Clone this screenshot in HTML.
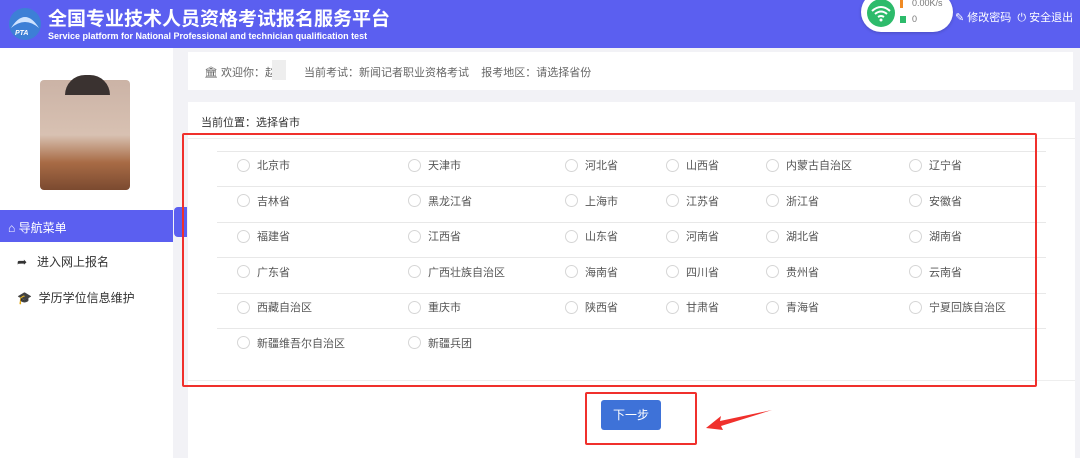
<!DOCTYPE html>
<html><head><meta charset="utf-8"><style>
*{margin:0;padding:0;box-sizing:border-box}
body{width:1080px;height:458px;overflow:hidden;background:#f2f2f6;font-family:"Liberation Sans","Noto Sans CJK SC",sans-serif;position:relative;color:#555}
.a{position:absolute}
.hdr{left:0;top:0;width:1080px;height:48px;background:#5b5ff0}
.t1{left:48px;top:4px;color:#fff;font-size:19px;font-weight:bold;white-space:nowrap}
.t2{left:48px;top:31px;color:#fff;font-size:9px;font-weight:bold;white-space:nowrap}
.side{left:0;top:48px;width:173px;height:410px;background:#fff}
.panel{background:#fff}
.line{height:1px;background:#e8e8e8;left:217px;width:829px}
.r{width:13px;height:13px;border:1px solid #d6d6d6;border-radius:50%}
.tx{font-size:11px;color:#555;white-space:nowrap}
</style></head><body>
<div class="a hdr"></div>
<svg class="a" style="left:7px;top:6px" width="36" height="36" viewBox="0 0 36 36"><circle cx="18" cy="18" r="16" fill="#3d7fd6"/><path d="M4 22 Q18 0 32 22 Q18 10 4 22Z" fill="#cfe3ff"/><text x="8" y="29" font-size="7" font-style="italic" font-weight="bold" fill="#fff" font-family="Liberation Sans">PTA</text></svg>
<div class="a t1">全国专业技术人员资格考试报名服务平台</div>
<div class="a t2">Service platform for National Professional and technician qualification test</div>
<div class="a" style="left:861px;top:-8px;width:92px;height:40px;background:#fff;border-radius:20px;box-shadow:0 1px 3px rgba(0,0,0,.2)"></div>
<svg class="a" style="left:866px;top:0" width="30" height="28" viewBox="0 0 30 28"><circle cx="15" cy="13" r="14" fill="#2dbb6b"/><path d="M6 11 Q15 3 24 11 M9 14 Q15 9 21 14 M12 17 Q15 15 18 17" stroke="#fff" stroke-width="2" fill="none"/><circle cx="15" cy="20" r="1.5" fill="#fff"/></svg>
<div class="a" style="left:900px;top:0;width:3px;height:8px;background:#f08a24"></div>
<div class="a tx" style="left:912px;top:-2px;font-size:9px;color:#777">0.00K/s</div>
<div class="a" style="left:900px;top:16px;width:6px;height:7px;background:#2dbb6b"></div>
<div class="a tx" style="left:912px;top:14px;font-size:9px;color:#777">0</div>
<div class="a tx" style="left:955px;top:9px;color:#fff;font-size:11px">✎ 修改密码 &nbsp;⏻ 安全退出</div>

<div class="a side"></div>
<div class="a" style="left:40px;top:80px;width:90px;height:110px;border-radius:4px;background:linear-gradient(180deg,#cbb3a6 0%,#d8c1b2 50%,#a86b45 75%,#7b4a30 100%)"></div>
<div class="a" style="left:65px;top:75px;width:45px;height:20px;border-radius:20px 20px 0 0;background:#3a3230"></div>
<div class="a" style="left:0;top:210px;width:173px;height:32px;background:#5b5ff0"></div>
<div class="a tx" style="left:8px;top:219px;color:#fff;font-size:12px">⌂ 导航菜单</div>
<div class="a" style="left:174px;top:207px;width:13px;height:30px;background:#5b5ff0;border-radius:4px 0 0 4px"></div>
<div class="a tx" style="left:17px;top:253px;color:#333;font-size:12px">➦ &nbsp;&nbsp;进入网上报名</div>
<div class="a tx" style="left:17px;top:289px;color:#333;font-size:12px">🎓 &nbsp;学历学位信息维护</div>

<div class="a panel" style="left:188px;top:52px;width:885px;height:38px"></div>
<div class="a tx" style="left:204px;top:64px;color:#666">🏛 欢迎你：赵</div>
<div class="a" style="left:272px;top:60px;width:14px;height:20px;background:#eee"></div>
<div class="a tx" style="left:304px;top:64px;color:#666">当前考试：新闻记者职业资格考试 &nbsp;&nbsp;&nbsp;报考地区：请选择省份</div>
<div class="a panel" style="left:188px;top:102px;width:887px;height:356px"></div>
<div class="a tx" style="left:201px;top:114px;color:#333">当前位置：选择省市</div>
<div class="a" style="left:188px;top:138px;width:887px;height:1px;background:#eee"></div>

<div class="a line" style="top:151px"></div>
<div class="a line" style="top:186px"></div>
<div class="a line" style="top:222px"></div>
<div class="a line" style="top:257px"></div>
<div class="a line" style="top:293px"></div>
<div class="a line" style="top:328px"></div>
<div class="a" style="left:188px;top:380px;width:887px;height:1px;background:#eee"></div>

<div id="g"></div>
<script>
var rows=[["北京市","天津市","河北省","山西省","内蒙古自治区","辽宁省"],["吉林省","黑龙江省","上海市","江苏省","浙江省","安徽省"],["福建省","江西省","山东省","河南省","湖北省","湖南省"],["广东省","广西壮族自治区","海南省","四川省","贵州省","云南省"],["西藏自治区","重庆市","陕西省","甘肃省","青海省","宁夏回族自治区"],["新疆维吾尔自治区","新疆兵团"]];
var xs=[237,408,565,666,766,909],h="";
rows.forEach(function(r,i){var y=165+i*35.5;r.forEach(function(t,j){h+='<div class="a r" style="left:'+xs[j]+'px;top:'+(y-6.5)+'px"></div><div class="a tx" style="left:'+(xs[j]+20)+'px;top:'+(y-8)+'px">'+t+'</div>';});});
document.getElementById("g").innerHTML=h;
</script>

<div class="a" style="left:182px;top:133px;width:855px;height:254px;border:2px solid #f0302c;border-radius:2px"></div>
<div class="a" style="left:601px;top:400px;width:60px;height:30px;background:#3e72d8;border-radius:3px;color:#fff;font-size:12px;text-align:center;line-height:30px">下一步</div>
<div class="a" style="left:585px;top:392px;width:112px;height:53px;border:2px solid #f0302c;border-radius:2px"></div>
<svg class="a" style="left:700px;top:405px" width="80" height="30" viewBox="0 0 80 30"><path d="M72 5 L20 16 L21 11 L6 23 L23 25 L21 21 Z" fill="#f0302c"/></svg>
</body></html>
